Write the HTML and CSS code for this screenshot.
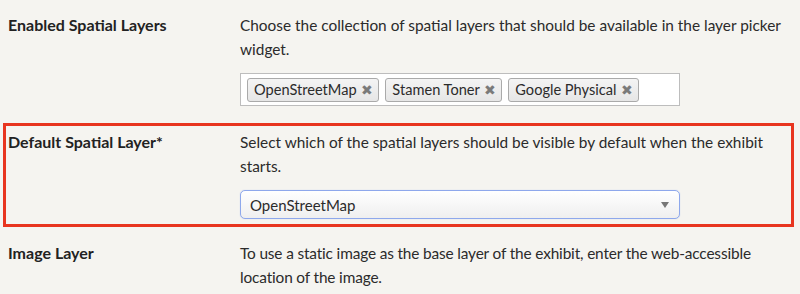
FILE: index.html
```html
<!DOCTYPE html>
<html lang="en">
<head>
    <meta charset="UTF-8">
    <title>Exhibit Settings</title>
    <link rel="stylesheet" href="styles.css">
</head>
<body>
    <div class="field first">
        <label class="field-label">Enabled Spatial Layers</label>
        <div class="field-body">
            <p class="help">Choose the collection of spatial layers that should be available in the layer picker widget.</p>
            <div class="tag-box">
                <span class="tag">OpenStreetMap <span class="tag-x">&#10006;</span></span>
                <span class="tag">Stamen Toner <span class="tag-x">&#10006;</span></span>
                <span class="tag">Google Physical <span class="tag-x">&#10006;</span></span>
            </div>
        </div>
    </div>

    <div class="field highlight">
        <label class="field-label">Default Spatial Layer*</label>
        <div class="field-body">
            <p class="help">Select which of the spatial layers should be visible by default when the exhibit starts.</p>
            <div class="select">
                <span>OpenStreetMap</span>
                <span class="arrow"></span>
            </div>
        </div>
    </div>

    <div class="field last">
        <label class="field-label">Image Layer</label>
        <div class="field-body">
            <p class="help narrow">To use a static image as the base layer of the exhibit, enter the web-accessible location of the image.</p>
        </div>
    </div>
</body>
</html>
```

FILE: styles.css
```css
html, body {
    height: 100%;
}
body {
    margin: 0;
    background: #f5f4f0;
    font-family: Lato, "Open Sans", sans-serif;
    font-size: 16px;
    color: #2b2b2b;
    overflow: hidden;
}
.field {
    display: grid;
    grid-template-columns: 232px 440px;
    padding: 13px 0 18px 8px;
}
.field-label {
    font-weight: bold;
    color: #222;
    line-height: 24px;
}
.help {
    margin: 0;
    line-height: 24px;
    width: 556px;
    font-size: 15.4px;
}
.tag-box {
    box-sizing: border-box;
    margin-top: 12px;
    height: 33px;
    background: #fff;
    border: 1px solid #bdbdbd;
    display: flex;
    align-items: flex-start;
    gap: 6px;
    padding: 4px 6px 0;
}
.tag {
    height: 22px;
    line-height: 22px;
    padding: 0 5px 0 6px;
    border: 1px solid #aaa;
    border-radius: 3px;
    background: linear-gradient(#f4f4f4, #e6e6e6);
    font-size: 14.6px;
    white-space: nowrap;
}
.tag-x {
    color: #7a7a7a;
    font-size: 14px;
    margin-left: 1px;
}
.first {
    padding-bottom: 17px;
}
.highlight {
    border: 3px solid #e8351f;
    margin: 0 6px 0 3px;
    padding: 4px 0 5px 2px;
}
.select {
    box-sizing: border-box;
    margin-top: 12px;
    height: 29px;
    border: 1px solid #8ea8ec;
    border-radius: 5px;
    box-shadow: 0 0 1px #a9bdf2;
    background: linear-gradient(#ffffff, #efefef);
    display: flex;
    align-items: center;
    justify-content: space-between;
    padding: 0 10px 0 9px;
    font-size: 15px;
}
.arrow {
    width: 0;
    height: 0;
    border-left: 4px solid transparent;
    border-right: 4px solid transparent;
    border-top: 6px solid #777;
}
.last {
    padding-top: 14px;
}
.narrow {
    letter-spacing: -0.15px;
}
```
